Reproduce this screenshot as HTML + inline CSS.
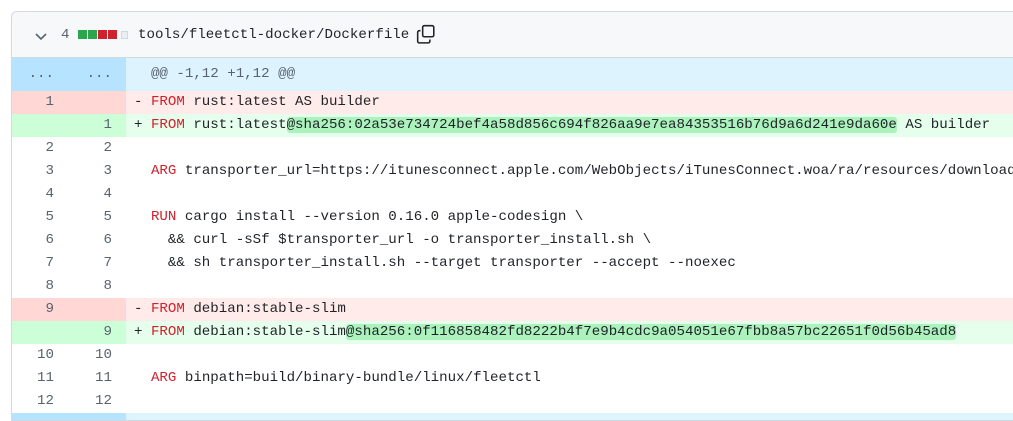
<!DOCTYPE html>
<html><head><style>
*{margin:0;padding:0;box-sizing:border-box}
body{width:1013px;height:416px;overflow:hidden;background:#fff;font-family:"Liberation Mono",monospace;font-size:14.13px;color:#1f2328;position:relative}
.box{position:absolute;left:11px;top:11px;width:1010px;height:410px;border:1px solid #d1d9e0;border-right:none;border-radius:6px 0 0 0;overflow:hidden}
.hdr{height:46px;background:#f6f8fa;border-bottom:1px solid #d1d9e0;position:relative}
.row{display:flex;height:23px;line-height:23px;white-space:pre}
.n{width:57px;text-align:right;padding-right:15px;color:#59636e}
.n2{width:57px;text-align:right;padding-right:14px;color:#59636e}
.c{flex:1;padding-left:8px}
.hunk{height:33px;line-height:33px;background:#ddf4ff}
.hunk .n,.hunk .n2{background:#b6e3ff}
.del{background:#ffebe9}.del .n,.del .n2{background:#ffd7d5}
.add{background:#e6ffec}.add .n,.add .n2{background:#ccffd8}
.k{color:#cf222e}
.h{background:#abf2bc;border-radius:3px}
.sq{position:absolute;top:18px;width:9px;height:9px}
</style></head><body>
<div class="box">
<div class="hdr">
<svg style="position:absolute;left:22px;top:20px" width="14" height="10" viewBox="0 0 14 10"><path d="M2 2l5 5 5-5" fill="none" stroke="#59636e" stroke-width="1.6"/></svg>
<span style="position:absolute;left:49px;top:15px;color:#59636e">4</span>
<div class="sq" style="left:66px;background:#2da44e"></div>
<div class="sq" style="left:76px;background:#2da44e"></div>
<div class="sq" style="left:86px;background:#cf222e"></div>
<div class="sq" style="left:96px;background:#cf222e"></div>
<div class="sq" style="left:109px;top:19px;background:#eaeef2;border:1px solid #d1d9e0;width:7px;height:8px"></div>
<span style="position:absolute;left:126px;top:15px">tools/fleetctl-docker/Dockerfile</span>
<svg style="position:absolute;left:404px;top:12px" width="20" height="20" viewBox="0 0 18 18" fill="none" stroke="#1f2328" stroke-width="1.4"><rect x="6" y="1.5" width="10" height="10" rx="1.5"/><path d="M4 6H3a1.5 1.5 0 0 0-1.5 1.5v8A1.5 1.5 0 0 0 3 17h8a1.5 1.5 0 0 0 1.5-1.5V14"/></svg>
</div>
<div class="row hunk"><div class="n">...</div><div class="n2">...</div><div class="c" style="color:#59636e">  @@ -1,12 +1,12 @@</div></div>
<div class="row del"><div class="n">1</div><div class="n2"></div><div class="c">- <span class="k">FROM</span> rust:latest AS builder</div></div>
<div class="row add"><div class="n"></div><div class="n2">1</div><div class="c">+ <span class="k">FROM</span> rust:latest<span class="h">@sha256:02a53e734724bef4a58d856c694f826aa9e7ea84353516b76d9a6d241e9da60e</span> AS builder</div></div>
<div class="row"><div class="n">2</div><div class="n2">2</div><div class="c"></div></div>
<div class="row"><div class="n">3</div><div class="n2">3</div><div class="c">  <span class="k">ARG</span> transporter_url=https://itunesconnect.apple.com/WebObjects/iTunesConnect.woa/ra/resources/download</div></div>
<div class="row"><div class="n">4</div><div class="n2">4</div><div class="c"></div></div>
<div class="row"><div class="n">5</div><div class="n2">5</div><div class="c">  <span class="k">RUN</span> cargo install --version 0.16.0 apple-codesign \</div></div>
<div class="row"><div class="n">6</div><div class="n2">6</div><div class="c">    &amp;&amp; curl -sSf $transporter_url -o transporter_install.sh \</div></div>
<div class="row"><div class="n">7</div><div class="n2">7</div><div class="c">    &amp;&amp; sh transporter_install.sh --target transporter --accept --noexec</div></div>
<div class="row"><div class="n">8</div><div class="n2">8</div><div class="c"></div></div>
<div class="row del"><div class="n">9</div><div class="n2"></div><div class="c">- <span class="k">FROM</span> debian:stable-slim</div></div>
<div class="row add"><div class="n"></div><div class="n2">9</div><div class="c">+ <span class="k">FROM</span> debian:stable-slim<span class="h">@sha256:0f116858482fd8222b4f7e9b4cdc9a054051e67fbb8a57bc22651f0d56b45ad8</span></div></div>
<div class="row"><div class="n">10</div><div class="n2">10</div><div class="c"></div></div>
<div class="row"><div class="n">11</div><div class="n2">11</div><div class="c">  <span class="k">ARG</span> binpath=build/binary-bundle/linux/fleetctl</div></div>
<div class="row"><div class="n">12</div><div class="n2">12</div><div class="c"></div></div>
<div class="row hunk" style="height:10px"><div class="n"></div><div class="n2"></div><div class="c"></div></div>
</div>
</body></html>
